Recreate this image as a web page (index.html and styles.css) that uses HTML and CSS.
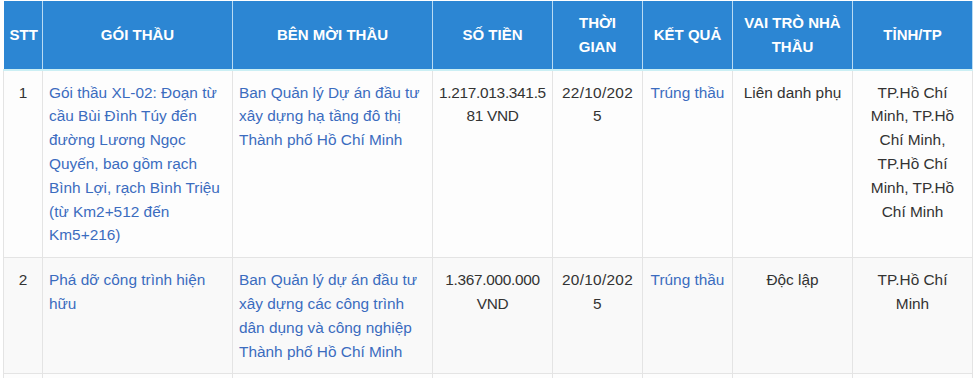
FILE: index.html
```html
<!DOCTYPE html>
<html lang="vi">
<head>
<meta charset="utf-8">
<title>Kết quả trúng thầu</title>
<link rel="stylesheet" href="styles.css">
</head>
<body>
<table class="bids">
  <colgroup>
    <col class="c-stt"><col class="c-pkg"><col class="c-owner"><col class="c-amount"><col class="c-time"><col class="c-result"><col class="c-role"><col class="c-prov">
  </colgroup>
  <thead>
    <tr>
      <th>STT</th>
      <th>GÓI THẦU</th>
      <th>BÊN MỜI THẦU</th>
      <th>SỐ TIỀN</th>
      <th>THỜI GIAN</th>
      <th>KẾT QUẢ</th>
      <th>VAI TRÒ NHÀ THẦU</th>
      <th>TỈNH/TP</th>
    </tr>
  </thead>
  <tbody>
    <tr>
      <td class="center">1</td>
      <td><a href="#">Gói thầu XL-02: Đoạn từ cầu Bùi Đình Túy đến đường Lương Ngọc Quyến, bao gồm rạch Bình Lợi, rạch Bình Triệu (từ Km2+512 đến Km5+216)</a></td>
      <td><a href="#">Ban Quản lý Dự án đầu tư xây dựng hạ tầng đô thị Thành phố Hồ Chí Minh</a></td>
      <td class="center amount">1.217.013.341.581 VND</td>
      <td class="center date">22/10/2025</td>
      <td class="center"><a href="#">Trúng thầu</a></td>
      <td class="center">Liên danh phụ</td>
      <td class="center">TP.Hồ Chí Minh, TP.Hồ Chí Minh, TP.Hồ Chí Minh, TP.Hồ Chí Minh</td>
    </tr>
    <tr>
      <td class="center">2</td>
      <td><a href="#">Phá dỡ công trình hiện hữu</a></td>
      <td><a href="#">Ban Quản lý dự án đầu tư xây dựng các công trình dân dụng và công nghiệp Thành phố Hồ Chí Minh</a></td>
      <td class="center amount">1.367.000.000 VND</td>
      <td class="center date">20/10/2025</td>
      <td class="center"><a href="#">Trúng thầu</a></td>
      <td class="center">Độc lập</td>
      <td class="center">TP.Hồ Chí Minh</td>
    </tr>
    <tr>
      <td>&nbsp;</td>
      <td>&nbsp;</td>
      <td>&nbsp;</td>
      <td>&nbsp;</td>
      <td>&nbsp;</td>
      <td>&nbsp;</td>
      <td>&nbsp;</td>
      <td>&nbsp;</td>
    </tr>
  </tbody>
</table>
</body>
</html>
```

FILE: styles.css
```css
html, body {
  margin: 0;
  padding: 0;
  background: #ffffff;
}

body {
  font-family: "Liberation Sans", Arial, sans-serif;
  font-size: 15.4px;
  line-height: 23.8px;
  color: #333333;
}

.bids {
  margin: 1px 0 0 3px;
  width: 969px;
  table-layout: fixed;
  border-collapse: collapse;
}

.c-stt { width: 39px; }
.c-pkg { width: 190px; }
.c-owner { width: 200px; }
.c-amount { width: 120px; }
.c-time { width: 90px; }
.c-result { width: 90px; }
.c-role { width: 120px; }
.c-prov { width: 120px; }

.bids th {
  background: #2c86d3;
  color: #ffffff;
  font-size: 15px;
  font-weight: 700;
  text-align: center;
  vertical-align: middle;
  padding: 10px 6px;
  border-left: 1px solid #b9dbf3;
  border-right: 1px solid #b9dbf3;
  border-bottom: 2px solid #cbeff4;
}

.bids th:first-child {
  border-left: none;
}

.bids td {
  padding: 10px 6px;
  vertical-align: top;
  text-align: left;
  border: 1px solid #e4e4e4;
}

.bids tbody tr:nth-child(odd) td {
  background: #fdfdfd;
}

.bids tbody tr:nth-child(even) td {
  background: #f9f9f9;
}

.bids td.center {
  text-align: center;
}

.bids td.amount {
  overflow-wrap: anywhere;
  letter-spacing: -0.3px;
}

.bids td.date {
  overflow-wrap: anywhere;
  letter-spacing: 0.3px;
}

.bids a {
  color: #3b6cbf;
  text-decoration: none;
}
```
